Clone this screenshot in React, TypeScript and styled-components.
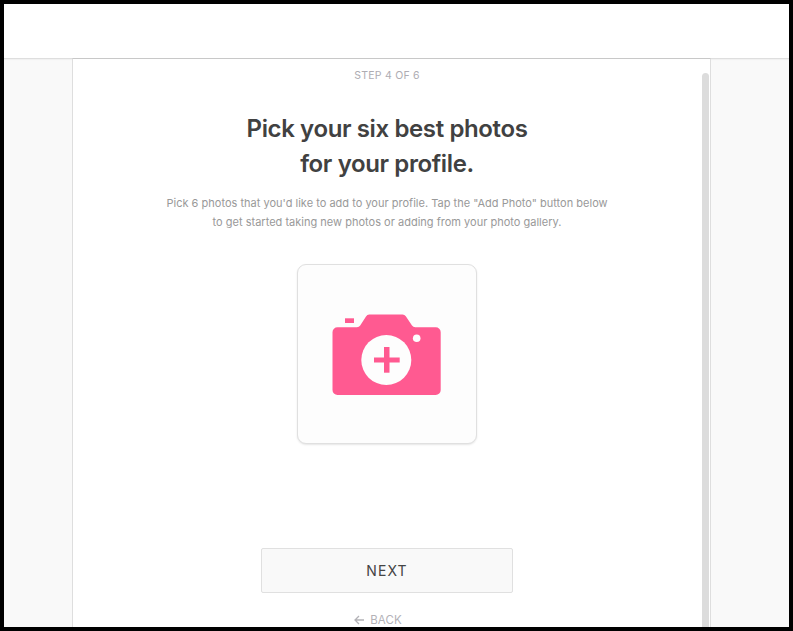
import React from "react";
import styled, { createGlobalStyle } from "styled-components";

const Global = createGlobalStyle`
  html, body { margin: 0; padding: 0; background: #fff; }
  #root { width: 793px; height: 631px; }
`;

const Frame = styled.div`
  box-sizing: border-box;
  width: 793px;
  height: 631px;
  border: 4px solid #000;
  display: flex;
  flex-direction: column;
  overflow: hidden;
  background: #f9f9f9;
  font-family: Inter, "Liberation Sans", sans-serif;
`;

const Header = styled.header`
  position: relative;
  height: 54px;
  flex: none;
  background: #fff;
  border-bottom: 1px solid #dedede;
  box-shadow: 0 1px 1px rgba(0, 0, 0, 0.03);
`;

const Stage = styled.main`
  flex: 1;
  min-height: 0;
  display: flex;
  justify-content: center;
  padding-right: 10px;
`;

const Card = styled.section`
  position: relative;
  box-sizing: border-box;
  width: 639px;
  margin-top: -1px;
  padding-right: 9px;
  background: #fff;
  border-top: 1px solid #c8c8c8;
  border-left: 1px solid #dedede;
  border-right: 1px solid #dedede;
  display: flex;
  flex-direction: column;
  align-items: center;
  overflow: hidden;
`;

const Scrollbar = styled.div`
  position: absolute;
  top: 14px;
  right: 1px;
  bottom: 0;
  width: 7px;
  background: #dcdcdc;
  border-radius: 4px 4px 0 0;
`;

const Step = styled.div`
  margin-top: 10px;
  font-size: 10.5px;
  line-height: 13px;
  color: #aeacb2;
  letter-spacing: 0.25px;
`;

const Title = styled.h1`
  margin: 29px 0 0;
  font-family: Inter, sans-serif;
  font-size: 24px;
  line-height: 35px;
  font-weight: 600;
  letter-spacing: -0.38px;
  color: #414141;
  text-align: center;
`;

const Lead = styled.p`
  margin: 13px 0 0;
  font-size: 11px;
  line-height: 19px;
  letter-spacing: 0.01px;
  color: #999;
  text-align: center;
`;

const PhotoTile = styled.button`
  box-sizing: border-box;
  width: 180px;
  height: 180px;
  margin-top: 32px;
  padding: 2px 0 0;
  display: flex;
  align-items: center;
  justify-content: center;
  background: #fdfdfd;
  border: 1px solid #e0e0e0;
  border-radius: 9px;
  box-shadow: 0 1px 2px rgba(0, 0, 0, 0.1);
`;

const NextButton = styled.button`
  box-sizing: border-box;
  width: 252px;
  height: 45px;
  margin-top: 104px;
  background: #f9f9f9;
  border: 1px solid #e0e0e0;
  border-radius: 2px;
  font-family: Inter, sans-serif;
  font-size: 14px;
  font-weight: 400;
  letter-spacing: 1.1px;
  color: #444;
`;

const BackLink = styled.a`
  margin: 20px 18px 0 0;
  display: flex;
  align-items: center;
  gap: 5px;
  font-size: 11.5px;
  line-height: 14px;
  letter-spacing: 0.1px;
  color: #b3b2b7;
`;

const CameraIcon = () => (
  <svg width="110" height="82" viewBox="0 0 110 82" aria-hidden="true">
    <path
      fill="#ff5a91"
      d="M5.5 13.3H25a4 4 0 0 0 3.2-1.7L34 2.5A4 4 0 0 1 37.3.5H70.5a4 4 0 0 1 3.3 1.7L80 11.6a4 4 0 0 0 3.3 1.7h20.4a5 5 0 0 1 5 5V76a5 5 0 0 1-5 5H5.5a5 5 0 0 1-5-5V18.3a5 5 0 0 1 5-5Z"
    />
    <rect x="13" y="4.3" width="9" height="4.7" fill="#ff5a91" />
    <circle cx="54.3" cy="46" r="25" fill="#fdfdfd" />
    <circle cx="84.7" cy="24.3" r="3.8" fill="#fdfdfd" />
    <rect x="42" y="43.5" width="25.7" height="5" fill="#ff5a91" />
    <rect x="52" y="33" width="5.5" height="25.7" fill="#ff5a91" />
  </svg>
);

const BackArrow = () => (
  <svg width="11" height="10" viewBox="0 0 11 10" aria-hidden="true">
    <path d="M10 5H1.5M5 1 1 5l4 4" fill="none" stroke="#b3b2b7" strokeWidth="1.3" />
  </svg>
);

export default function App() {
  return (
    <Frame>
      <Global />
      <Header />
      <Stage>
        <Card>
          <Scrollbar />
          <Step>STEP 4 OF 6</Step>
          <Title>
            Pick your six best photos
            <br />
            for your profile.
          </Title>
          <Lead>
            Pick 6 photos that you'd like to add to your profile. Tap the "Add Photo" button below
            <br />
            to get started taking new photos or adding from your photo gallery.
          </Lead>
          <PhotoTile aria-label="Add Photo">
            <CameraIcon />
          </PhotoTile>
          <NextButton>NEXT</NextButton>
          <BackLink>
            <BackArrow />
            BACK
          </BackLink>
        </Card>
      </Stage>
    </Frame>
  );
}
